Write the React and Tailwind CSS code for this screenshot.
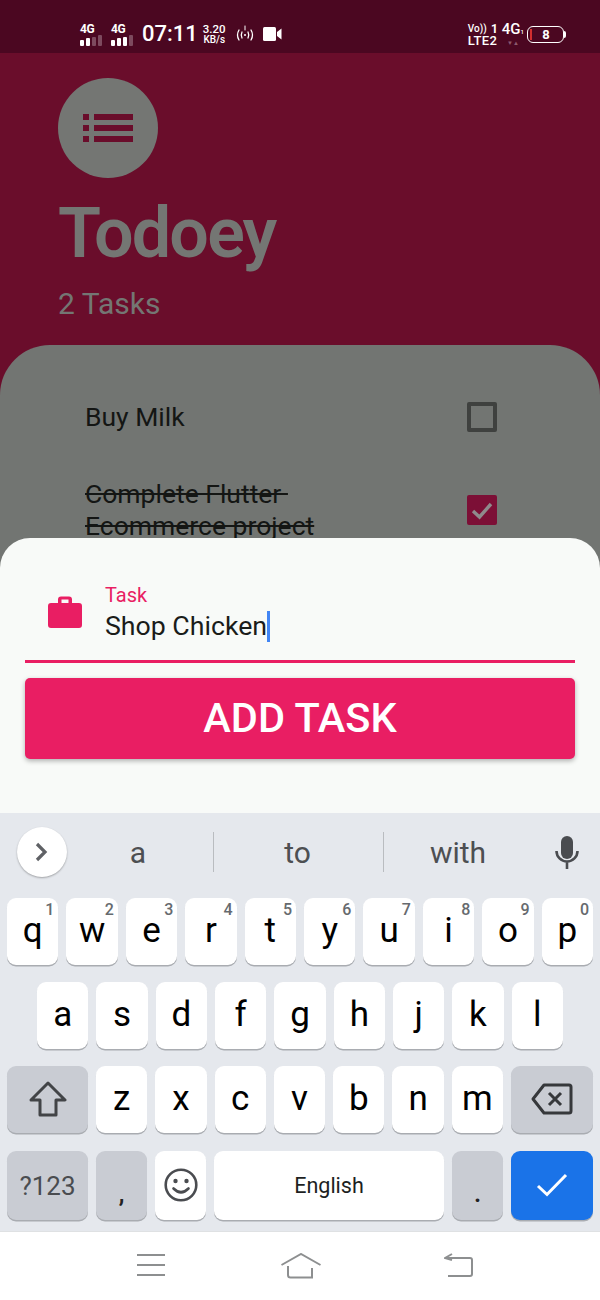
import React from 'react';

const rowOne = [['q', '1'], ['w', '2'], ['e', '3'], ['r', '4'], ['t', '5'], ['y', '6'], ['u', '7'], ['i', '8'], ['o', '9'], ['p', '0']];
const rowTwo = ['a', 's', 'd', 'f', 'g', 'h', 'j', 'k', 'l'];
const rowThree = ['z', 'x', 'c', 'v', 'b', 'n', 'm'];

function Signal({ lit }) {
  return (
    <div className="flex flex-col items-start w-[24px]">
      <span className="text-[12px] leading-[12px] font-bold text-white tracking-[-0.3px]">4G</span>
      <div className="flex gap-[2px] items-end h-[11px]">
        {[0, 1, 2, 3].map((i) => (
          <span
            key={i}
            className={i < lit ? 'w-[4px] bg-white rounded-[1px]' : 'w-[4px] bg-[#7d4a5e] rounded-[1px]'}
            style={{ height: 6 + i * 1.5 }}
          />
        ))}
      </div>
    </div>
  );
}

function StatusBar() {
  return (
    <div className="h-[53px] bg-[#4b0721] flex items-center pl-[80px] pr-[34px] pt-[15px] text-white">
      <Signal lit={2} />
      <div className="ml-[7px]"><Signal lit={3} /></div>
      <span className="ml-[7px] text-[22px] font-medium leading-none">07:11</span>
      <div className="ml-[5px] flex flex-col items-center font-medium">
        <span className="text-[11.500px] leading-[11px]">3.20</span>
        <span className="text-[10px] leading-[10px]">KB/s</span>
      </div>
      <svg className="ml-[9px]" width="20" height="18" viewBox="0 0 20 18" fill="none" stroke="white" strokeWidth="1.3" strokeLinecap="round">
        <path d="M4 5 Q1 10 4 15" />
        <path d="M7 7 Q5.5 10 7 13" />
        <circle cx="10" cy="10" r="1" fill="white" stroke="none" />
        <path d="M13 7 Q14.5 10 13 13" />
        <path d="M16 5 Q19 10 16 15" />
        <path d="M10 1v4" strokeWidth="1" />
      </svg>
      <svg className="ml-[8px]" width="19" height="14" viewBox="0 0 19 14" fill="white">
        <rect x="0" y="0" width="13" height="14" rx="1.5" />
        <path d="M14 5 L18.5 1.5 V12.5 L14 9 Z" />
      </svg>
      <div className="ml-auto flex flex-col font-medium w-[30px]">
        <span className="h-[12px] flex items-center justify-between">
          <span className="text-[10px] leading-[12px]">Vo))</span>
          <span className="text-[12px] leading-[12px] font-bold">1</span>
        </span>
        <span className="text-[13px] leading-[11px] tracking-[0.3px]">LTE2</span>
      </div>
      <div className="ml-[4px] flex flex-col items-center">
        <span className="text-[15px] leading-[14px] font-medium">4G<span className="text-[6px]">1</span></span>
        <span className="text-[6px] leading-[8px] text-[#8d5a6e]">▼▲</span>
      </div>
      <div className="ml-[3px] flex items-center">
        <div className="w-[37px] h-[17px] border-[1.5px] border-white rounded-[6px] flex items-center pl-[2px]">
          <span className="w-[2px] h-[11px] bg-[#d32f2f]" />
          <span className="flex-1 text-center text-[13px] font-bold leading-none pr-[3px]">8</span>
        </div>
        <span className="w-[2px] h-[7px] bg-white rounded-r-sm" />
      </div>
    </div>
  );
}

function TodoBackdrop() {
  return (
    <div className="h-[760px] bg-[#6a0d2b] overflow-hidden flex flex-col">
      <div className="pl-[58px] pt-[25px] h-[292px]">
        <div className="w-[100px] h-[100px] rounded-full bg-[#747673] flex items-center justify-center">
          <svg width="50" height="30" viewBox="0 0 50 30" fill="#6a0d2b">
            <rect x="0" y="1" width="6" height="6" />
            <rect x="0" y="12" width="6" height="6" />
            <rect x="0" y="23" width="6" height="6" />
            <rect x="11" y="1" width="39" height="6" />
            <rect x="11" y="12" width="39" height="6" />
            <rect x="11" y="23" width="39" height="6" />
          </svg>
        </div>
        <h1 className="mt-[14px] text-[70px] leading-[82px] font-semibold tracking-[-1.8px] text-[#747673]">Todoey</h1>
        <p className="mt-[12px] text-[30px] leading-[35px] text-[#747673]">2 Tasks</p>
      </div>
      <div className="flex-1 bg-[#727572] rounded-t-[50px] pt-[56px] pl-[85px] pr-[103px] text-[#141614]">
        <div className="flex items-center justify-between h-[32px]">
          <span className="text-[26.500px] leading-[32px]">Buy Milk</span>
          <span className="w-[30px] h-[30px] border-[4px] border-[#3f413f] rounded-[2px]" />
        </div>
        <div className="mt-[45px] flex items-center justify-between">
          <div className="text-[26.500px] leading-[32px] line-through whitespace-pre">
            <div>{'Complete Flutter '}</div>
            <div>Ecommerce project</div>
          </div>
          <span className="w-[30px] h-[30px] bg-[#7c0f36] rounded-[2px] flex items-center justify-center">
            <svg width="24" height="24" viewBox="0 0 24 24" fill="none" stroke="#8f8a8c" strokeWidth="3.4">
              <path d="M3 13 L9.5 19 L21 6" />
            </svg>
          </span>
        </div>
      </div>
    </div>
  );
}

function AddTaskSheet() {
  return (
    <div className="absolute left-0 right-0 bottom-0 h-[275px] bg-[#f8faf8] rounded-t-[30px] px-[25px] pt-[45px]">
      <div className="relative h-[80px] border-b-[3px] border-[#e91e63] pl-[80px]">
        <svg className="absolute left-[23px] top-[13px]" width="34" height="32" viewBox="0 0 34 32" fill="#e91e63">
          <path fillRule="evenodd" d="M10 7V3.5A3 3 0 0 1 13 0.5h8a3 3 0 0 1 3 3V7h7a3 3 0 0 1 3 3v19a3 3 0 0 1-3 3H3a3 3 0 0 1-3-3V10a3 3 0 0 1 3-3zM13.5 3.5V7h7V3.5z" />
        </svg>
        <div className="text-[20px] leading-[24px] text-[#e91e63]">Task</div>
        <div className="mt-[3px] flex items-center h-[32px]">
          <span className="text-[26.700px] leading-[32px] text-[#1a1c1a]">Shop Chicken</span>
          <span className="w-[3px] h-[31px] bg-[#4285f4]" />
        </div>
      </div>
      <button className="mt-[15px] w-full h-[81px] rounded-[5px] bg-[#e91e63] text-white text-[41.500px] font-medium shadow-[0_2px_5px_rgba(0,0,0,0.3)]">
        ADD TASK
      </button>
    </div>
  );
}

function Key({ children, hint, className = 'flex-1 bg-white', textClass = 'text-[35px] text-black pb-[2px]' }) {
  return (
    <div className={`relative h-[67px] rounded-[9px] flex items-center justify-center shadow-[0_1.5px_0_#a9acb1] ${className}`}>
      {hint && <span className="absolute top-[2px] right-[4px] text-[16px] leading-[20px] font-medium text-[#666a6e]">{hint}</span>}
      <span className={`leading-none ${textClass}`}>{children}</span>
    </div>
  );
}

function Suggestions() {
  return (
    <div className="h-[50px] mb-[21px] pl-[17px] flex items-center text-[30px] text-[#4d4f52]">
      <div className="w-[50px] h-[50px] rounded-full bg-white shadow-[0_1px_2px_rgba(0,0,0,0.3)] flex items-center justify-center">
        <svg width="16" height="22" viewBox="0 0 16 22" fill="none" stroke="#5f6165" strokeWidth="3.2">
          <path d="M3 3 L11 11 L3 19" />
        </svg>
      </div>
      <span className="w-[146px] text-center pr-[4px]">a</span>
      <span className="w-[1px] h-[40px] bg-[#b9bcc0]" />
      <span className="w-[169px] text-center pr-[2px]">to</span>
      <span className="w-[1px] h-[40px] bg-[#b9bcc0]" />
      <span className="w-[150px] text-center pr-[2px]">with</span>
      <svg className="ml-[21px]" width="24" height="33" viewBox="0 0 24 33" fill="none">
        <rect x="6" y="0" width="12" height="23" rx="6" fill="#4a4c50" />
        <path d="M1.5 15a10.5 10.5 0 0 0 21 0M12 26v7" stroke="#4a4c50" strokeWidth="2.6" />
      </svg>
    </div>
  );
}

function Keyboard() {
  const grey = 'bg-[#c9ccd3]';
  return (
    <div className="h-[418px] bg-[#e5e8ed] pt-[14px]">
      <Suggestions />
      <div className="flex gap-2 px-[7px]">
        {rowOne.map(([k, n]) => <Key key={k} hint={n}>{k}</Key>)}
      </div>
      <div className="flex gap-2 px-[37px] mt-[17px]">
        {rowTwo.map((k) => <Key key={k}>{k}</Key>)}
      </div>
      <div className="flex gap-2 px-[7px] mt-[17px]">
        <Key className={`w-[81px] ${grey}`}>
          <svg className="block" width="38" height="36" viewBox="0 0 38 36" fill="none" stroke="#424447" strokeWidth="3" strokeLinejoin="round">
            <path d="M19 2 L36 19 H27 V34 H11 V19 H2 Z" />
          </svg>
        </Key>
        {rowThree.map((k) => <Key key={k}>{k}</Key>)}
        <Key className={`w-[82px] ${grey}`}>
          <svg className="block" width="42" height="32" viewBox="0 0 42 32" fill="none" stroke="#36383b" strokeWidth="3" strokeLinejoin="round">
            <path d="M13 2 H38 A2 2 0 0 1 40 4 V28 A2 2 0 0 1 38 30 H13 L2 16 Z" />
            <path d="M18 10 L30 22 M30 10 L18 22" />
          </svg>
        </Key>
      </div>
      <div className="flex gap-2 px-[7px] mt-[17px] [&>div]:h-[69px] [&>div]:translate-y-[1px]">
        <Key className={`w-[81px] ${grey}`} textClass="text-[26px] text-[#4a4c50]">?123</Key>
        <Key className={`w-[51px] ${grey} items-end pb-[14px]`} textClass="text-[23px] font-bold text-[#222]">,</Key>
        <Key className="w-[51px] bg-white">
          <svg className="block" width="34" height="34" viewBox="0 0 34 34" fill="none" stroke="#4a4c50" strokeWidth="2.6">
            <circle cx="17" cy="17" r="15.3" />
            <circle cx="11.5" cy="13" r="2.2" fill="#4a4c50" stroke="none" />
            <circle cx="22.5" cy="13" r="2.2" fill="#4a4c50" stroke="none" />
            <path d="M9.5 20.5 Q17 28 24.5 20.5" strokeLinecap="round" />
          </svg>
        </Key>
        <Key className="flex-1 bg-white" textClass="text-[21.500px] text-[#1d1f22]">English</Key>
        <Key className={`w-[51px] ${grey} items-end pb-[14px]`} textClass="text-[23px] font-bold text-[#222]">.</Key>
        <Key className="w-[82px] bg-[#1a73e8]">
          <svg className="block" width="32" height="24" viewBox="0 0 32 24" fill="none" stroke="white" strokeWidth="3">
            <path d="M2 13 L11 21.5 L30 2" />
          </svg>
        </Key>
      </div>
    </div>
  );
}

function NavBar() {
  return (
    <div className="h-[69px] bg-white border-t border-[#dfe1e3] flex items-start pt-[21px] pl-[137px]">
      <svg width="28" height="24" viewBox="0 0 28 24" fill="none" stroke="#8d8f90" strokeWidth="2">
        <path d="M0 2h28M0 12h28M0 22h28" />
      </svg>
      <svg className="ml-[116px]" width="40" height="26" viewBox="0 0 40 26" fill="none" stroke="#8d8f90" strokeWidth="2">
        <path d="M0.5 12 L20 1 L39.5 12" />
        <path d="M7 13 V22 Q7 24.500 9.500 24.500 H31 V15" />
      </svg>
      <svg className="ml-[123px]" width="30" height="26" viewBox="0 0 30 26" fill="none" stroke="#8d8f90" strokeWidth="2">
        <path d="M4 23 H26 Q28 23 28 21 V7 Q28 5 26 5 H1" />
        <path d="M8 1 L1 5 L8 7" />
      </svg>
    </div>
  );
}

export default function App() {
  return (
    <div className="w-[600px] h-[1300px] overflow-hidden bg-white font-['Roboto',sans-serif]">
      <div className="relative h-[813px]">
        <StatusBar />
        <TodoBackdrop />
        <AddTaskSheet />
      </div>
      <Keyboard />
      <NavBar />
    </div>
  );
}
